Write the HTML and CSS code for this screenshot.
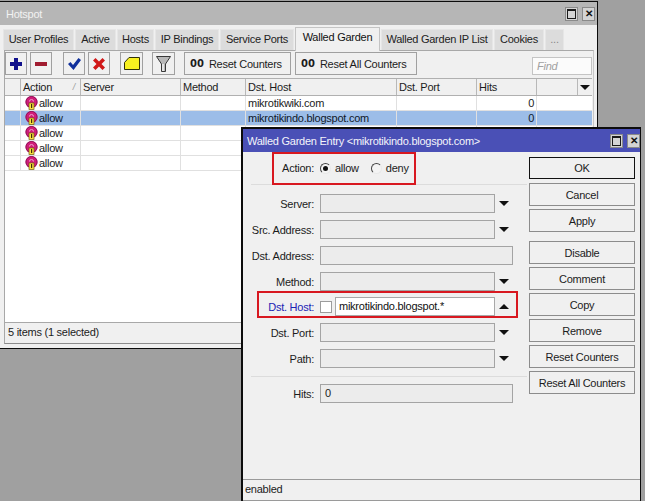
FILE: index.html
```html
<!DOCTYPE html>
<html lang="en">

<head>
    <meta charset="UTF-8">
    <meta name="viewport" content="width=device-width, initial-scale=1.0">
    <title>Hotspot</title>
    <link rel="stylesheet" href="styles.css">
</head>

<body>
    <svg class="defs" width="0" height="0">
        <symbol id="rule" viewBox="0 0 13 14">
            <circle cx="6.500" cy="6" r="6" fill="#d01c78"/>
            <circle cx="6.500" cy="6" r="5.600" fill="none" stroke="#801050" stroke-width=".8"/>
            <path d="M4.500 5.500a2 2 0 0 1 4 0" fill="none" stroke="#f0a0cc" stroke-width="1"/>
            <rect x="4" y="7" width="5" height="6.500" fill="#f8e040" stroke="#705c10" stroke-width=".7"/>
            <rect x="6" y="8" width="1.200" height="4" fill="#403008"/>
        </symbol>
    </svg>

    <!-- main window -->
    <div class="window hotspot">
        <div class="titlebar">
            <span class="title">Hotspot</span>
            <span class="win-btn"><i class="max"></i></span>
            <span class="win-btn"><i class="close">&#10005;</i></span>
        </div>
        <div class="tabs">
            <span class="tab t1">User Profiles</span>
            <span class="tab t2">Active</span>
            <span class="tab t3">Hosts</span>
            <span class="tab t4">IP Bindings</span>
            <span class="tab t5">Service Ports</span>
            <span class="tab t6 active">Walled Garden</span>
            <span class="tab t7">Walled Garden IP List</span>
            <span class="tab t8">Cookies</span>
            <span class="tab t9">...</span>
        </div>
        <div class="panel">
            <div class="toolbar">
                <button class="tool">
                    <svg width="12" height="12" viewBox="0 0 12 12"><path d="M4 0h4v4h4v4H8v4H4V8H0V4h4z" fill="#10108c"/></svg>
                </button>
                <button class="tool">
                    <svg width="12" height="12" viewBox="0 0 12 12"><rect y="4" width="12" height="4" fill="#a01c30"/></svg>
                </button>
                <button class="tool gap-a">
                    <svg width="13" height="12" viewBox="0 0 13 12"><path d="M0 6l2.500-2 2.500 3L10.500 0 13 2 5.500 12z" fill="#10309c"/></svg>
                </button>
                <button class="tool">
                    <svg width="12" height="12" viewBox="0 0 12 12"><path d="M0 2.500L2.500 0 6 3.500 9.500 0 12 2.500 8.500 6 12 9.500 9.500 12 6 8.500 2.500 12 0 9.500 3.500 6z" fill="#d01818"/></svg>
                </button>
                <button class="tool gap-b">
                    <svg width="16" height="13" viewBox="0 0 16 13"><path d="M.5 5.500L5 .5h10.500v12H.5z" fill="#f8f020" stroke="#303008"/></svg>
                </button>
                <button class="tool gap-c">
                    <svg width="15" height="16" viewBox="0 0 15 16"><path d="M.5.500h14L9.500 8v7.500h-4V8z" fill="#b8b8b8" stroke="#383838"/><path d="M7 8v7" stroke="#f4f4f4" stroke-width="1.500"/></svg>
                </button>
                <button class="text-tool gap-c wide-a"><b>00</b>Reset Counters</button>
                <button class="text-tool wide-b"><b>00</b>Reset All Counters</button>
                <span class="find">Find</span>
            </div>
            <div class="grid">
                <div class="grid-row head">
                    <span class="c0"></span>
                    <span class="c1">Action<em>/</em></span>
                    <span class="c2">Server</span>
                    <span class="c3">Method</span>
                    <span class="c4">Dst. Host</span>
                    <span class="c5">Dst. Port</span>
                    <span class="c6">Hits</span>
                    <span class="c7-head"></span>
                    <span class="c8"><i class="arrow down"></i></span>
                </div>
                <div class="grid-row">
                    <span class="c0"></span>
                    <span class="c1"><svg width="13" height="14"><use href="#rule"/></svg>allow</span>
                    <span class="c2"></span>
                    <span class="c3"></span>
                    <span class="c4">mikrotikwiki.com</span>
                    <span class="c5"></span>
                    <span class="c6 num">0</span>
                </div>
                <div class="grid-row selected">
                    <span class="c0"></span>
                    <span class="c1"><svg width="13" height="14"><use href="#rule"/></svg>allow</span>
                    <span class="c2"></span>
                    <span class="c3"></span>
                    <span class="c4">mikrotikindo.blogspot.com</span>
                    <span class="c5"></span>
                    <span class="c6 num">0</span>
                </div>
                <div class="grid-row">
                    <span class="c0"></span>
                    <span class="c1"><svg width="13" height="14"><use href="#rule"/></svg>allow</span>
                    <span class="c2"></span>
                    <span class="c3"></span>
                    <span class="c4"></span>
                    <span class="c5"></span>
                    <span class="c6"></span>
                </div>
                <div class="grid-row">
                    <span class="c0"></span>
                    <span class="c1"><svg width="13" height="14"><use href="#rule"/></svg>allow</span>
                    <span class="c2"></span>
                    <span class="c3"></span>
                    <span class="c4"></span>
                    <span class="c5"></span>
                    <span class="c6"></span>
                </div>
                <div class="grid-row">
                    <span class="c0"></span>
                    <span class="c1"><svg width="13" height="14"><use href="#rule"/></svg>allow</span>
                    <span class="c2"></span>
                    <span class="c3"></span>
                    <span class="c4"></span>
                    <span class="c5"></span>
                    <span class="c6"></span>
                </div>
            </div>
            <div class="status">5 items (1 selected)</div>
        </div>
    </div>

    <!-- entry dialog -->
    <div class="window dialog">
        <div class="titlebar blue">
            <span class="title">Walled Garden Entry &lt;mikrotikindo.blogspot.com&gt;</span>
            <span class="win-btn"><i class="max"></i></span>
            <span class="win-btn"><i class="close">&#10005;</i></span>
        </div>
        <div class="dialog-body">
            <div class="form">
                <div class="action-row">
                    <span class="label">Action:</span>
                    <span class="radio on"></span><span class="radio-text">allow</span>
                    <span class="radio"></span><span class="radio-text">deny</span>
                </div>
                <div class="fields">
                    <div class="row"><span class="label">Server:</span><span class="field"></span><i class="arrow down"></i></div>
                    <div class="row"><span class="label">Src. Address:</span><span class="field"></span><i class="arrow down"></i></div>
                    <div class="row"><span class="label">Dst. Address:</span><span class="field full"></span></div>
                    <div class="row"><span class="label">Method:</span><span class="field"></span><i class="arrow down"></i></div>
                    <div class="row host"><span class="label link">Dst. Host:</span><span class="check"></span><span class="field short white">mikrotikindo.blogspot.*</span><i class="arrow up"></i></div>
                    <div class="row"><span class="label">Dst. Port:</span><span class="field"></span><i class="arrow down"></i></div>
                    <div class="row"><span class="label">Path:</span><span class="field"></span><i class="arrow down"></i></div>
                </div>
                <div class="row hits"><span class="label">Hits:</span><span class="field full">0</span></div>
            </div>
            <div class="buttons">
                <button class="btn default">OK</button>
                <button class="btn">Cancel</button>
                <button class="btn">Apply</button>
                <button class="btn spaced">Disable</button>
                <button class="btn">Comment</button>
                <button class="btn">Copy</button>
                <button class="btn">Remove</button>
                <button class="btn">Reset Counters</button>
                <button class="btn">Reset All Counters</button>
            </div>
            <div class="mark mark-action"></div>
            <div class="mark mark-host"></div>
        </div>
        <div class="dialog-status">enabled</div>
    </div>
</body>

</html>
```

FILE: styles.css
```css
* {
    box-sizing: border-box;
}

html,
body {
    height: 100%;
}

body {
    margin: 0;
    background-color: #a0a0a0;
    font-family: 'Liberation Sans', Arial, sans-serif;
    font-size: 11px;
    letter-spacing: -0.25px;
    color: #1c1c1c;
    overflow: hidden;
    position: relative;
}

.defs {
    position: absolute;
}

.window {
    position: absolute;
    display: flex;
    flex-direction: column;
    background-color: #f0f0f0;
    border: 1px solid #0c0c0c;
}

.hotspot {
    left: -1px;
    top: 1px;
    width: 599px;
    height: 348px;
}

.dialog {
    left: 241px;
    top: 127px;
    width: 400px;
    height: 376px;
    border-width: 2px 1px 2px 2px;
}

.titlebar {
    height: 23px;
    flex: none;
    display: flex;
    align-items: center;
    gap: 4px;
    padding: 0 2px 0 6px;
    background-color: #b6b6b6;
    color: #f2f2f2;
}

.titlebar.blue {
    padding: 0 0 0 4px;
    background-color: #4a50b6;
    color: #f4f4fa;
}

.title {
    flex: 1;
}

.win-btn {
    width: 13px;
    height: 14px;
    display: flex;
    align-items: center;
    justify-content: center;
    background-color: #d4d4d4;
    border: 1px solid #8a8a8a;
}

.max {
    width: 9px;
    height: 10px;
    border: 1px solid #1a1a1a;
    border-top-width: 2px;
}

.close {
    font-style: normal;
    font-weight: bold;
    font-size: 10px;
    line-height: 1;
    color: #111;
}

.tabs {
    height: 25px;
    flex: none;
    display: flex;
    align-items: flex-end;
    padding-left: 3px;
    background-color: #f0f0f0;
}

.tab {
    height: 21px;
    margin-right: 1px;
    padding-bottom: 2px;
    display: flex;
    align-items: center;
    justify-content: center;
    background-color: #dcdcdc;
    border: 1px solid #e6e6e6;
    border-bottom: none;
    color: #222;
}

.tab.active {
    height: 24px;
    padding-bottom: 5px;
    background-color: #f0f0f0;
    border-color: #c4c4c4;
    margin-bottom: -1px;
    position: relative;
    color: #111;
}

.t1 { width: 71px; }
.t2 { width: 41px; }
.t3 { width: 37px; }
.t4 { width: 64px; }
.t5 { width: 74px; }
.t6 { width: 85px; }
.t7 { width: 112px; }
.t8 { width: 50px; }
.t9 { width: 19px; color: #888; }

.panel {
    flex: 1;
    margin-left: 4px;
    margin-right: 3px;
    margin-bottom: 4px;
    display: flex;
    flex-direction: column;
    border-top: 1px solid #a8a8a8;
    border-right: 1px solid #c8c8c8;
    border-left: 1px solid #a8a8a8;
    border-bottom: 1px solid #8c8c8c;
    min-height: 0;
}

.toolbar {
    height: 27px;
    flex: none;
    display: flex;
    align-items: flex-start;
    gap: 3px;
    padding-top: 1px;
}

button {
    font: inherit;
    letter-spacing: inherit;
    color: inherit;
    padding: 0;
    background-color: #f0f0f0;
    border: 1px solid #a0a0a0;
}

.tool {
    width: 22px;
    height: 23px;
    display: flex;
    align-items: center;
    justify-content: center;
}

.tool.gap-a {
    margin-left: 8px;
}

.tool.gap-b {
    width: 23px;
    margin-left: 7px;
}

.tool.gap-c {
    width: 23px;
    margin-left: 6px;
}

.text-tool {
    height: 23px;
    display: flex;
    align-items: center;
    padding-left: 5px;
    white-space: nowrap;
}

.text-tool b {
    font-family: 'DejaVu Sans', sans-serif;
    font-size: 10px;
    margin-right: 5px;
    letter-spacing: 0;
}

.text-tool.gap-c {
    margin-left: 6px;
    width: 107px;
}

.wide-b {
    width: 122px;
    margin-left: 1px;
}

.find {
    width: 60px;
    height: 18px;
    margin-left: auto;
    margin-right: 1px;
    margin-top: 5px;
    padding-left: 4px;
    line-height: 17px;
    font-style: italic;
    color: #a0a0a0;
    background-color: #fbfbfb;
    border: 1px solid #c4c4c4;
}

.grid {
    flex: 1;
    background-color: #fff;
    margin-right: 1px;
    border-top: 1px solid #b0b0b0;
    border-bottom: 1px solid #a8a8a8;
}

.grid-row {
    height: 15px;
    display: flex;
    border-bottom: 1px solid #e0e0e0;
    line-height: 14px;
}

.grid-row > span {
    flex: none;
    height: 100%;
    padding-left: 2px;
    border-right: 1px solid #e0e0e0;
    white-space: nowrap;
    display: flex;
    align-items: center;
}

.grid-row.head {
    height: 17px;
    background-color: #f0f0f0;
    border-bottom-color: #b0b0b0;
}

.grid-row.head > span {
    border-right-color: #b8b8b8;
    padding-left: 2px;
}

.grid-row.selected {
    background-color: #9cbde8;
    color: #101828;
}

.c0 { width: 16px; }
.c1 { width: 60px; }
.c2 { width: 100px; }
.c3 { width: 65px; }
.c4 { width: 151px; }
.c5 { width: 80px; }
.c6 { width: 60px; }
.c7-head { width: 41px; }

.grid-row .c8 {
    width: 15px;
    border-right: none;
    padding-left: 1px;
}

.grid-row .c1 svg {
    margin: 0 1px 0 2px;
    flex: none;
}

.c1 em {
    margin-left: auto;
    margin-right: 5px;
    font-size: 9px;
    color: #999;
}

.grid-row .num {
    justify-content: flex-end;
    padding-right: 2px;
}

.status {
    height: 20px;
    flex: none;
    padding-left: 3px;
    line-height: 18px;
}

.arrow {
    display: block;
    flex: none;
    width: 0;
    height: 0;
    border-left: 5px solid transparent;
    border-right: 5px solid transparent;
}

.arrow.down {
    border-top: 5px solid #111;
}

.arrow.up {
    border-bottom: 5px solid #111;
}

.dialog-body {
    flex: 1;
    display: flex;
    position: relative;
    min-height: 0;
}

.form {
    width: 276px;
    flex: none;
    margin-left: 8px;
}

.label {
    width: 63px;
    flex: none;
    text-align: right;
    margin-right: 6px;
    white-space: nowrap;
}

.label.link {
    color: #1a24b4;
}

.action-row {
    height: 33px;
    display: flex;
    align-items: center;
    border-bottom: 1px solid #dcdcdc;
}

.radio {
    width: 11px;
    height: 11px;
    flex: none;
    border-radius: 50%;
    border: 1px solid;
    border-color: #444 #e8e8e8 #e8e8e8 #444;
    background-color: #f4f4f4;
    margin-right: 4px;
    display: flex;
    align-items: center;
    justify-content: center;
}

.radio.on::after {
    content: "";
    width: 5px;
    height: 5px;
    border-radius: 50%;
    background-color: #111;
}

.radio-text {
    margin-right: 12px;
}

.fields {
    display: flex;
    flex-direction: column;
    gap: 7px;
    padding-top: 9px;
    padding-bottom: 8px;
    border-bottom: 1px solid #dcdcdc;
}

.row {
    height: 19px;
    display: flex;
    align-items: center;
}

.row.host {
    margin-top: -1px;
}

.field {
    width: 175px;
    height: 19px;
    flex: none;
    margin-right: 4px;
    padding-left: 4px;
    line-height: 17px;
    background-color: #ececec;
    border: 1px solid #a4a4a4;
}

.field.full {
    width: 193px;
    margin-right: 0;
}

.field.short {
    width: 160px;
}

.field.white {
    background-color: #fff;
    border-color: #a8a8a8;
    padding-left: 3px;
    color: #111;
}

.check {
    width: 12px;
    height: 12px;
    flex: none;
    margin-right: 3px;
    background-color: #fff;
    border: 1px solid #9c9c9c;
}

.hits {
    margin-top: 7px;
}

.buttons {
    width: 106px;
    flex: none;
    margin-left: 2px;
    padding-top: 5px;
    display: flex;
    flex-direction: column;
    gap: 3px;
}

.btn {
    height: 23px;
    flex: none;
    border-color: #8c8c8c;
}

.btn.default {
    border-color: #111;
    margin-bottom: 1px;
    height: 22px;
    margin-top: 0;
}

.btn.spaced {
    margin-top: 6px;
}

.mark {
    position: absolute;
    border: 2px solid #d81820;
    pointer-events: none;
}

.mark-action {
    left: 29px;
    top: 0;
    width: 144px;
    height: 33px;
}

.mark-host {
    left: 14px;
    top: 139px;
    width: 261px;
    height: 27px;
}

.dialog-status {
    height: 22px;
    flex: none;
    padding-left: 2px;
    line-height: 19px;
    border-top: 1px solid #9a9a9a;
    border-bottom: 1px solid #9a9a9a;
}
```
